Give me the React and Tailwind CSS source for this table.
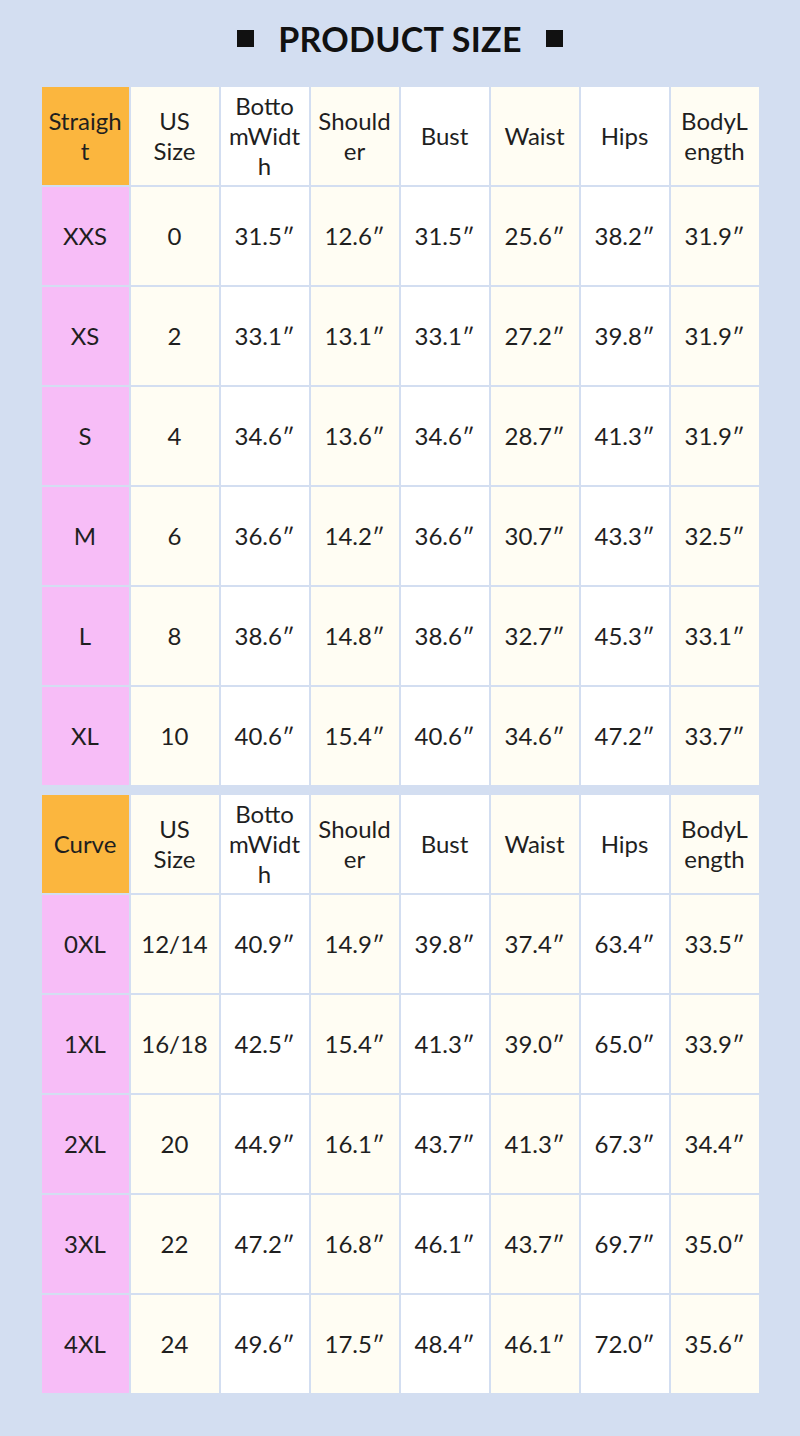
const HEAD = [
  ['US', 'Size'],
  ['Botto', 'mWidt', 'h'],
  ['Should', 'er'],
  ['Bust'],
  ['Waist'],
  ['Hips'],
  ['BodyL', 'ength'],
];

const STRAIGHT = [
  ['XXS', '0', '31.5″', '12.6″', '31.5″', '25.6″', '38.2″', '31.9″'],
  ['XS', '2', '33.1″', '13.1″', '33.1″', '27.2″', '39.8″', '31.9″'],
  ['S', '4', '34.6″', '13.6″', '34.6″', '28.7″', '41.3″', '31.9″'],
  ['M', '6', '36.6″', '14.2″', '36.6″', '30.7″', '43.3″', '32.5″'],
  ['L', '8', '38.6″', '14.8″', '38.6″', '32.7″', '45.3″', '33.1″'],
  ['XL', '10', '40.6″', '15.4″', '40.6″', '34.6″', '47.2″', '33.7″'],
];

const CURVE = [
  ['0XL', '12/14', '40.9″', '14.9″', '39.8″', '37.4″', '63.4″', '33.5″'],
  ['1XL', '16/18', '42.5″', '15.4″', '41.3″', '39.0″', '65.0″', '33.9″'],
  ['2XL', '20', '44.9″', '16.1″', '43.7″', '41.3″', '67.3″', '34.4″'],
  ['3XL', '22', '47.2″', '16.8″', '46.1″', '43.7″', '69.7″', '35.0″'],
  ['4XL', '24', '49.6″', '17.5″', '48.4″', '46.1″', '72.0″', '35.6″'],
];

// odd columns cream, even columns white
function colBg(i) {
  return i % 2 === 1 ? 'bg-[#fffdf3]' : 'bg-white';
}

function Cell({ bg, children }) {
  return (
    <div className={`${bg} h-[98px] flex flex-col items-center justify-center text-center text-[24px] leading-[30px] text-[#1f1f1f]`}>
      {children}
    </div>
  );
}

function SizeTable({ label, rows }) {
  return (
    <div className="grid grid-cols-[87px_repeat(7,88px)] gap-[2px]">
      <Cell bg="bg-[#fbb63e]">
        {label.map((l) => <span key={l}>{l}</span>)}
      </Cell>
      {HEAD.map((lines, i) => (
        <Cell key={i} bg={colBg(i + 1)}>
          {lines.map((l) => <span key={l}>{l}</span>)}
        </Cell>
      ))}
      {rows.map((r) =>
        r.map((v, i) => (
          <Cell key={r[0] + i} bg={i === 0 ? 'bg-[#f7bdf7]' : colBg(i)}>
            <span>{v}</span>
          </Cell>
        ))
      )}
    </div>
  );
}

export default function App() {
  return (
    <div className="w-[800px] h-[1436px] bg-[#d3def1] flex flex-col items-center font-['Lato','Noto_Sans',sans-serif]">
      <div className="h-[87px] w-full flex items-center justify-center gap-[24px] pb-[10px]">
        <span className="w-[17px] h-[17px] bg-[#111]" />
        <span className="text-[34px] font-bold text-[#111] tracking-[0.3px]">PRODUCT SIZE</span>
        <span className="w-[17px] h-[17px] bg-[#111]" />
      </div>
      <div className="flex flex-col gap-[10px]">
        <SizeTable label={['Straigh', 't']} rows={STRAIGHT} />
        <SizeTable label={['Curve']} rows={CURVE} />
      </div>
    </div>
  );
}
